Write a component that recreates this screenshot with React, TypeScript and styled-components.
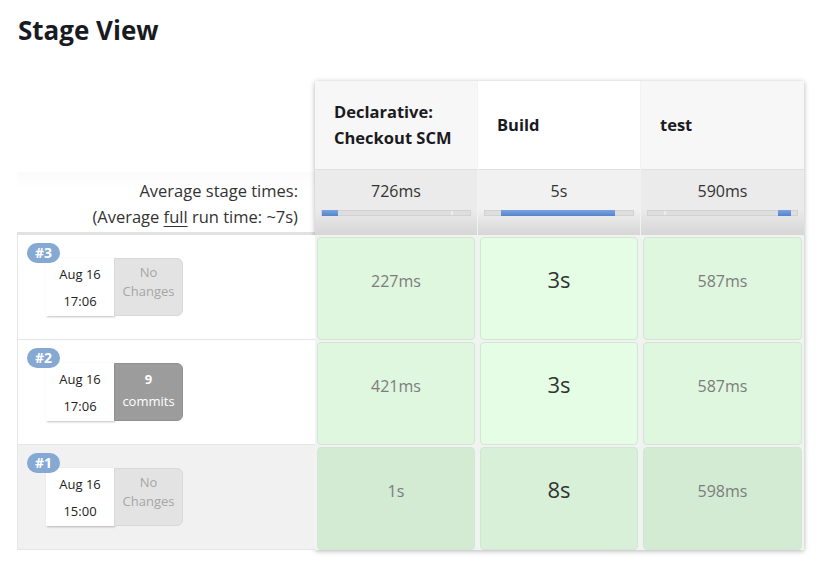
import React from "react";
import styled, { createGlobalStyle, css } from "styled-components";

const GlobalStyle = createGlobalStyle`
  body {
    margin: 0;
    background: #fff;
    font-family: "Open Sans", "Noto Sans", sans-serif;
    color: #333;
  }
`;

type Stage = { name: React.ReactNode; avg: string; fill: [number, number]; mark?: number; wide?: boolean };
type Run = { id: number; date: string; time: string; commits?: number; cells: string[]; old?: boolean };

const stages: Stage[] = [
  { name: <>Declarative:<br />Checkout SCM</>, avg: "726ms", fill: [0, 16], mark: 129 },
  { name: "Build", avg: "5s", fill: [16, 114], wide: true },
  { name: "test", avg: "590ms", fill: [130, 13], mark: 16 },
];

const runs: Run[] = [
  { id: 3, date: "Aug 16", time: "17:06", cells: ["227ms", "3s", "587ms"] },
  { id: 2, date: "Aug 16", time: "17:06", commits: 9, cells: ["421ms", "3s", "587ms"] },
  { id: 1, date: "Aug 16", time: "15:00", cells: ["1s", "8s", "598ms"], old: true },
];

const Page = styled.div`
  padding: 12px 17px 20px 17px;
`;

const Title = styled.h2`
  margin: 0 0 0 1px;
  font-size: 26px;
  font-weight: 700;
  color: #1a1a22;
  line-height: 36px;
`;

const Table = styled.div`
  display: flex;
  margin-top: 33px;
`;

const RunsColumn = styled.div`
  width: 298px;
  display: flex;
  flex-direction: column;
`;

const HeaderSpacer = styled.div`
  height: 91px;
`;

const AvgLabel = styled.div`
  height: 63px;
  box-sizing: border-box;
  padding: 6px 17px 0 0;
  text-align: right;
  font-size: 16.5px;
  line-height: 26px;
  color: #333;
  border-bottom: 3px solid #e2e2e2;
  background: linear-gradient(#fbfbfb, #fff 30%);
  u {
    text-underline-offset: 3px;
  }
`;

const RunRow = styled.div<{ $old?: boolean }>`
  position: relative;
  height: 105px;
  box-sizing: border-box;
  border: 1px solid #e6e6e6;
  border-top: none;
  border-right: none;
  background: ${(p) => (p.$old ? "#f1f1f1" : "#fff")};
  &:first-of-type {
    border-top: 1px solid #e6e6e6;
  }
`;

const Badge = styled.span`
  position: absolute;
  left: 9px;
  top: 8px;
  z-index: 2;
  height: 20px;
  padding: 0 8px;
  border-radius: 10px;
  background: #85a9d3;
  color: #fff;
  font-size: 14px;
  font-weight: 700;
  line-height: 20px;
`;

const RunCard = styled.div`
  position: absolute;
  left: 28px;
  top: 23px;
  display: flex;
  height: 58px;
`;

const DateBox = styled.div`
  width: 68px;
  background: #fff;
  box-shadow: 1px 1px 2px rgba(0, 0, 0, 0.25);
  display: flex;
  flex-direction: column;
  align-items: center;
  justify-content: center;
  gap: 7px;
  font-size: 13px;
  line-height: 20px;
  color: #222;
`;

const ChangesBox = styled.div<{ $commits?: boolean }>`
  width: 69px;
  border-radius: 0 6px 6px 0;
  display: flex;
  flex-direction: column;
  align-items: center;
  justify-content: flex-start;
  padding-top: 4px;
  box-sizing: border-box;
  font-size: 13px;
  line-height: 19px;
  ${(p) =>
    p.$commits
      ? css`
          background: #9c9c9c;
          border: 1px solid #8f8f8f;
          color: #fff;
          padding-top: 6px;
          gap: 3px;
          b {
            font-weight: 700;
          }
        `
      : css`
          background: #e3e3e3;
          border: 1px solid #d8d8d8;
          color: #a6a6a6;
        `}
`;

const StagesBox = styled.div`
  width: 489px;
  box-shadow: 0 1px 5px rgba(0, 0, 0, 0.3);
  background: #f0f4f0;
`;

const Row = styled.div`
  display: grid;
  grid-template-columns: 162px 162px 163px;
  column-gap: 1px;
`;

const StageHeader = styled.div<{ $wide?: boolean }>`
  height: 88px;
  display: flex;
  align-items: center;
  padding: 0 19px;
  background: ${(p) => (p.$wide ? "#fff" : "#f7f7f7")};
  font-size: 16.5px;
  font-weight: 700;
  line-height: 26px;
  color: #1a1a22;
`;

const AvgCell = styled.div<{ $wide?: boolean }>`
  height: 66px;
  box-sizing: border-box;
  padding: 9px 6px 0;
  text-align: center;
  background: linear-gradient(
    ${(p) => (p.$wide ? "#f1f1f1" : "#ebebeb")} 60%,
    #d6d6d6
  );
  border-top: 1px solid #e0e0e0;
  font-size: 16px;
  line-height: 24px;
  color: #333;
`;

const Track = styled.div`
  position: relative;
  margin-top: 7px;
  height: 6px;
  background: #dedede;
  border: 1px solid #d2d2d2;
  box-sizing: border-box;
`;

const Fill = styled.div`
  position: absolute;
  top: -1px;
  bottom: -1px;
  background: linear-gradient(#7aa3e0, #5584cc);
`;

const Mark = styled.div`
  position: absolute;
  top: 0;
  bottom: 0;
  width: 2px;
  background: #ececec;
`;

const CellRow = styled(Row)`
  height: 105px;
  padding: 2px 0 0;
  box-sizing: border-box;
`;

const Cell = styled.div<{ $wide?: boolean; $old?: boolean }>`
  margin: 0 2px;
  border: 1px solid #d5e4d5;
  border-radius: 4px;
  display: flex;
  justify-content: center;
  padding-top: ${(p) => (p.$wide ? "29px" : "31px")};
  box-sizing: border-box;
  background: ${(p) =>
    p.$old ? (p.$wide ? "#d8f0d8" : "#d3ebd3") : p.$wide ? "#e4fde4" : "#dff6df"};
  font-size: ${(p) => (p.$wide ? "22px" : "16px")};
  line-height: 24px;
  color: ${(p) => (p.$wide ? "#333" : "#7d7d7d")};
`;

export default function App() {
  return (
    <Page>
      <GlobalStyle />
      <Title>Stage View</Title>
      <Table>
        <RunsColumn>
          <HeaderSpacer />
          <AvgLabel>
            Average stage times:
            <br />
            (Average <u>full</u> run time: ~7s)
          </AvgLabel>
          {runs.map((r) => (
            <RunRow key={r.id} $old={r.old}>
              <Badge>#{r.id}</Badge>
              <RunCard>
                <DateBox>
                  <span>{r.date}</span>
                  <span>{r.time}</span>
                </DateBox>
                {r.commits ? (
                  <ChangesBox $commits>
                    <b>{r.commits}</b>
                    <span>commits</span>
                  </ChangesBox>
                ) : (
                  <ChangesBox>
                    <span>No</span>
                    <span>Changes</span>
                  </ChangesBox>
                )}
              </RunCard>
            </RunRow>
          ))}
        </RunsColumn>
        <StagesBox>
          <Row>
            {stages.map((s, i) => (
              <StageHeader key={i} $wide={s.wide}>
                <div>{s.name}</div>
              </StageHeader>
            ))}
          </Row>
          <Row>
            {stages.map((s, i) => (
              <AvgCell key={i} $wide={s.wide}>
                {s.avg}
                <Track>
                  {s.mark !== undefined && <Mark style={{ left: s.mark }} />}
                  <Fill style={{ left: s.fill[0], width: s.fill[1] }} />
                </Track>
              </AvgCell>
            ))}
          </Row>
          {runs.map((r) => (
            <CellRow key={r.id}>
              {r.cells.map((c, i) => (
                <Cell key={i} $wide={stages[i].wide} $old={r.old}>
                  {c}
                </Cell>
              ))}
            </CellRow>
          ))}
        </StagesBox>
      </Table>
    </Page>
  );
}
